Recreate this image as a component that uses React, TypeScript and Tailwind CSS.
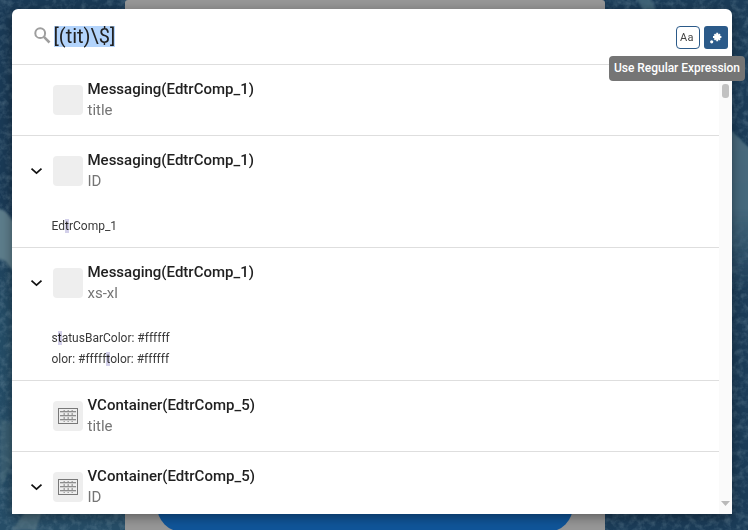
import React from 'react';

type Part = { text: string; hit?: boolean };
type Result = { title: string; field: string; grid?: boolean; open?: boolean; lines?: Part[][]; height: string };

const results: Result[] = [
  { title: 'Messaging(EdtrComp_1)', field: 'title', height: 'h-[71px]' },
  {
    title: 'Messaging(EdtrComp_1)', field: 'ID', open: true, height: 'h-[112px]',
    lines: [[{ text: 'Ed' }, { text: 't', hit: true }, { text: 'rComp_1' }]],
  },
  {
    title: 'Messaging(EdtrComp_1)', field: 'xs-xl', open: true, height: 'h-[133px]',
    lines: [
      [{ text: 's' }, { text: 't', hit: true }, { text: 'atusBarColor: #ffffff' }],
      [{ text: 'olor: #fffff' }, { text: 't', hit: true }, { text: 'olor: #ffffff' }],
    ],
  },
  { title: 'VContainer(EdtrComp_5)', field: 'title', grid: true, height: 'h-[71px]' },
  { title: 'VContainer(EdtrComp_5)', field: 'ID', grid: true, open: true, height: 'h-[112px]' },
];

/* Dark ocean texture behind the dialog */
function Backdrop() {
  return (
    <svg className="absolute inset-0" width="748" height="530" aria-hidden="true">
      <defs>
        <filter id="grain" x="0" y="0" width="100%" height="100%">
          <feTurbulence type="fractalNoise" baseFrequency="0.16" numOctaves="3" seed="8" />
          <feColorMatrix values="0 0 0 0 0.33  0 0 0 0 0.48  0 0 0 0 0.56  1.6 0 0 0 -0.65" />
        </filter>
        <filter id="soft"><feGaussianBlur stdDeviation="1.2" /></filter>
        <linearGradient id="sea" x1="0" y1="0" x2="0" y2="1">
          <stop offset="0" stopColor="#1a3a56" />
          <stop offset="0.38" stopColor="#1a3a56" />
          <stop offset="0.6" stopColor="#244c66" />
          <stop offset="1" stopColor="#264d67" />
        </linearGradient>
        <linearGradient id="foam" x1="0" y1="0" x2="0" y2="1">
          <stop offset="0" stopColor="#496a7d" />
          <stop offset="0.5" stopColor="#44677b" />
          <stop offset="1" stopColor="#44677b" stopOpacity="0" />
        </linearGradient>
      </defs>
      <rect width="748" height="530" fill="url(#sea)" />
      <rect x="600" width="148" height="530" fill="#1b3c58" />
      <rect width="748" height="530" filter="url(#grain)" opacity="0.35" />
      <g filter="url(#soft)">
        <path d="M-3 208 L5 211 L14 222 V272 L5 261 L-3 258Z" fill="#5d7d8b" />
        <path d="M731 130 L750 149 V290 H731Z" fill="url(#foam)" />
        <path d="M0 418 L14 426 V460 L0 490Z" fill="#4c6d7d" opacity="0.5" />
        <path d="M12 530 L25 512 H42 L36 530Z" fill="#547482" opacity="0.7" />
        <path d="M636 -2 H650 L656 10 H643Z" fill="#496a7d" opacity="0.8" />
      </g>
    </svg>
  );
}

function GridIcon() {
  return (
    <svg width="22" height="16" viewBox="0 0 22 16" fill="none" shapeRendering="crispEdges">
      <path d="M1.5 .5H20.5V15.5H1.5Z" stroke="#787878" />
      <path d="M7.5 2V14M11.5 2V14M15.5 2V14" stroke="#a8a8a8" />
      <path d="M6.5 2V14M10.5 2V14M14.5 2V14" stroke="#c8c8c8" />
      <path d="M3 3.5H19M3 7.5H19M3 11.5H19" stroke="#8c8c8c" />
      <path d="M3 4.5H19M3 8.5H19M3 12.5H19" stroke="#cfcfcf" />
    </svg>
  );
}

function ResultRow({ item }: { item: Result }) {
  return (
    <div className={`${item.height} shrink-0 border-b border-[#dedede]`}>
      <div className="flex h-[70px] items-center pl-[17px]">
        <div className="w-[24px] shrink-0">
          {item.open && (
            <svg width="14" height="14" viewBox="0 0 14 14" fill="none" className="block">
              <path d="M2.5 4.6 L7.5 9.2 L12.5 4.6" stroke="#111" strokeWidth="1.7" />
            </svg>
          )}
        </div>
        <div className="flex size-[30px] shrink-0 items-center justify-center rounded-[4px] bg-[#eee]">
          {item.grid && <GridIcon />}
        </div>
        <div className="ml-[4.5px] pb-[1px] text-[15px] leading-[21px]">
          <div className="font-medium text-[#212121]">{item.title}</div>
          <div className="text-[#757575]">{item.field}</div>
        </div>
      </div>
      {item.lines && (
        <div className="pt-[10px] pl-[39.5px] text-[12px] leading-[21px] text-[#3a3a3a]">
          {item.lines.map((line, i) => (
            <div key={i} className="whitespace-pre">
              {line.map((p, j) => (
                <span key={j} className={p.hit ? 'bg-[#d3d0ea] text-[#222]' : ''}>{p.text}</span>
              ))}
            </div>
          ))}
        </div>
      )}
    </div>
  );
}

export default function App() {
  return (
    <div className="relative h-[530px] w-[748px] overflow-hidden bg-[#1c3d59] font-['Roboto','Liberation_Sans',sans-serif]">
      <Backdrop />
      <div className="absolute top-0 left-[125px] h-[530px] w-[480px] rounded-t-[3px] bg-[#979797]">
        <div className="absolute top-[480px] left-[32px] h-[52px] w-[416px] rounded-[26px] bg-[#105599]" />
      </div>

      <main className="relative mt-[9px] ml-[12px] flex h-[505px] w-[720px] flex-col overflow-hidden rounded-t-[6px] bg-white shadow-[0_3px_12px_rgba(0,0,0,0.4)]">
        <header className="flex h-[56px] shrink-0 items-center border-b border-[#dedede] pr-[4px] pl-[22px]">
          <svg width="17" height="17" viewBox="0 0 17 17" fill="none" stroke="#9e9e9e" strokeWidth="2" className="mt-[-2px]">
            <circle cx="6.2" cy="6.2" r="4.9" />
            <path d="M9.9 9.9 L15.5 15.5" strokeWidth="2.5" />
          </svg>
          <div className="ml-[2.5px] h-[21px] bg-[#b3d4fc] text-[20px] leading-[21px] text-[#212121]">[(tit)\$]</div>
          <div className="flex-1" />
          <div className="mt-[2px] flex h-[23px] w-[24px] items-center justify-center rounded-[4px] border border-[#2b5a89] pt-[1px] pr-[2px] text-[11px] tracking-[0.4px] text-[#444]">Aa</div>
          <div className="mt-[2px] ml-[4px] flex h-[23px] w-[24px] items-center justify-center rounded-[3px] bg-[#2b5a89]">
            <svg width="12" height="12" viewBox="0 0 12 12" stroke="white" fill="none">
              <path d="M7.2 .8V9.2M3 5H11.4M4.4 2.2L10 7.8M10 2.2L4.4 7.8" strokeWidth="2" />
              <circle cx="1.7" cy="9.8" r="1.6" fill="white" stroke="none" />
            </svg>
          </div>
        </header>

        <div className="flex min-h-0 flex-1">
          <div className="flex min-w-0 flex-1 flex-col overflow-hidden">
            {results.map((item, i) => <ResultRow key={i} item={item} />)}
          </div>
          <div className="flex w-[13px] shrink-0 flex-col items-center justify-between bg-[#fafafa] pt-[19px] pb-[8px]">
            <div className="h-[14px] w-[7px] rounded-[3px] bg-[#c1c1c1]" />
            <svg width="9" height="5"><path d="M0 0H9L4.5 5Z" fill="#b9b9b9" /></svg>
          </div>
        </div>
      </main>

      <div className="absolute top-[56px] left-[609px] flex h-[25px] w-[136px] items-center justify-center rounded-[4px] bg-[#757575] pb-[2px] text-[12px] font-medium tracking-[-0.03px] whitespace-nowrap text-white">
        Use Regular Expression
      </div>
    </div>
  );
}
